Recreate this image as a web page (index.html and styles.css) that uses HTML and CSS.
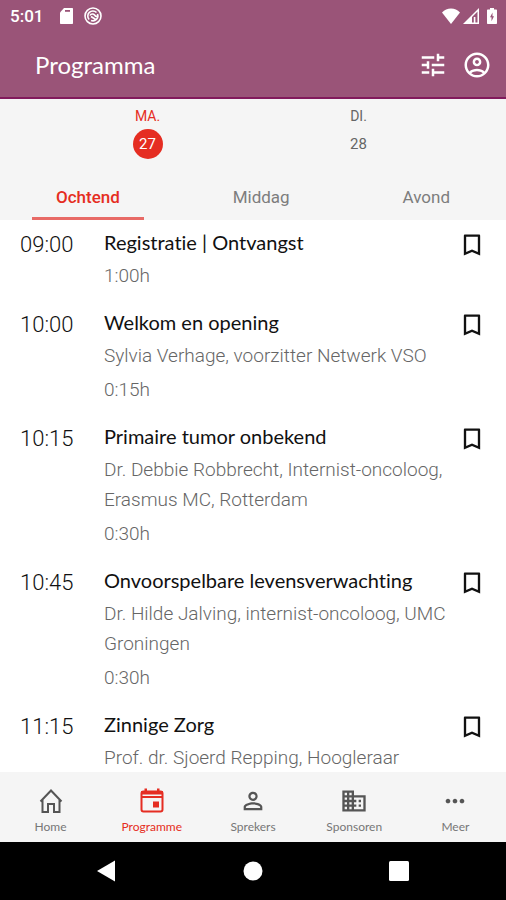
FILE: index.html
```html
<!DOCTYPE html>
<html lang="nl">
<head>
<meta charset="UTF-8">
<meta name="viewport" content="width=device-width, initial-scale=1.0">
<title>Programma</title>
<link rel="stylesheet" href="styles.css">
</head>
<body>
<!-- Icons used more than once -->
<svg width="0" height="0" class="defs">
    <symbol id="bookmark" viewBox="0 0 24 24"><path d="M18 3H6c-.6 0-1 .4-1 1v17l7-3 7 3V4c0-.6-.4-1-1-1zm-1 15l-5-2.180L7 18V5h10v13z"/></symbol>
</svg>

<header class="header">
    <div class="status">
        <span class="clock">5:01</span>
        <svg class="s-icon" viewBox="0 0 18 18"><path d="M7 1h8c.6 0 1 .4 1 1v14c0 .6-.4 1-1 1H4c-.6 0-1-.4-1-1V5.500z"/><path class="cut" d="M8 3h5v1.800H8z"/></svg>
        <svg class="s-icon" viewBox="0 0 18 18"><circle class="line" cx="9" cy="9" r="8"/><path class="line" d="M5.200 12.500A5 5 0 0 1 12.500 5.500M13.500 7A5 5 0 0 1 7 13.500M6 8.500c1-2 3.500-2 4.500-.5s1.500 1.500 2.500 1.500M7 9.500l5.500 3.500"/></svg>
        <span class="spacer"></span>
        <svg class="s-icon wifi" viewBox="0 0 18 18"><path d="M9 17L0 5.500C2.500 3 5.500 1.500 9 1.500S15.500 3 18 5.500z"/></svg>
        <svg class="s-icon signal" viewBox="0 0 18 18"><path fill-rule="evenodd" d="M17 1v16H1zM15.500 4.500L10 10v5.500h1.800V10h1.600v5.500h2.100z"/></svg>
        <svg class="s-icon battery" viewBox="0 0 12 18"><path d="M4 1h4v1.500h2c.6 0 1 .4 1 1V16c0 .6-.4 1-1 1H2c-.6 0-1-.4-1-1V3.500c0-.6.400-1 1-1h2z"/><path class="cut" d="M6.500 5.500L4 10.200h1.500v4L8 9.300H6.500z"/></svg>
    </div>
    <div class="toolbar">
        <h1>Programma</h1>
        <button class="icon-btn" type="button" aria-label="Filter">
            <svg viewBox="0 0 24 24"><path d="M3 17v2h6v-2H3zM3 5v2h10V5H3zm10 16v-2h8v-2h-8v-2h-2v6h2zM7 9v2H3v2h4v2h2V9H7zm14 4v-2H11v2h10zm-6-4h2V7h4V5h-4V3h-2v6z"/></svg>
        </button>
        <button class="icon-btn" type="button" aria-label="Profiel">
            <svg viewBox="0 0 24 24"><path d="M12 2C6.480 2 2 6.480 2 12s4.480 10 10 10 10-4.480 10-10S17.520 2 12 2zM7.350 18.500C8.660 17.560 10.260 17 12 17s3.340.56 4.650 1.500C15.340 19.440 13.740 20 12 20s-3.340-.56-4.650-1.500zm10.790-1.380C16.450 15.800 14.320 15 12 15s-4.450.8-6.140 2.120C4.700 15.730 4 13.950 4 12c0-4.420 3.580-8 8-8s8 3.580 8 8c0 1.950-.7 3.730-1.860 5.120zM12 6c-1.930 0-3.500 1.570-3.500 3.500S10.070 13 12 13s3.500-1.570 3.500-3.500S13.930 6 12 6zm0 5c-.83 0-1.500-.67-1.500-1.500S11.170 8 12 8s1.500.67 1.500 1.500S12.830 11 12 11z"/></svg>
        </button>
    </div>
</header>

<!-- Days -->
<div class="days">
    <button class="day active" type="button"><span>MA.</span><span class="num">27</span></button>
    <button class="day" type="button"><span>DI.</span><span class="num">28</span></button>
</div>

<!-- Parts of the day -->
<div class="tabs">
    <button class="tab active" type="button">Ochtend</button>
    <button class="tab" type="button">Middag</button>
    <button class="tab" type="button">Avond</button>
</div>

<main class="list">
    <article class="item">
        <time class="time">09:00</time>
        <div class="info">
            <h2>Registratie | Ontvangst</h2>
            <p>1:00h</p>
        </div>
        <button class="mark" type="button" aria-label="Bewaren"><svg><use href="#bookmark"/></svg></button>
    </article>
    <article class="item">
        <time class="time">10:00</time>
        <div class="info">
            <h2>Welkom en opening</h2>
            <p>Sylvia Verhage, voorzitter Netwerk VSO</p>
            <p>0:15h</p>
        </div>
        <button class="mark" type="button" aria-label="Bewaren"><svg><use href="#bookmark"/></svg></button>
    </article>
    <article class="item">
        <time class="time">10:15</time>
        <div class="info">
            <h2>Primaire tumor onbekend</h2>
            <p>Dr. Debbie Robbrecht, Internist-oncoloog, Erasmus MC, Rotterdam</p>
            <p>0:30h</p>
        </div>
        <button class="mark" type="button" aria-label="Bewaren"><svg><use href="#bookmark"/></svg></button>
    </article>
    <article class="item">
        <time class="time">10:45</time>
        <div class="info">
            <h2>Onvoorspelbare levensverwachting</h2>
            <p>Dr. Hilde Jalving, internist-oncoloog, UMC Groningen</p>
            <p>0:30h</p>
        </div>
        <button class="mark" type="button" aria-label="Bewaren"><svg><use href="#bookmark"/></svg></button>
    </article>
    <article class="item">
        <time class="time">11:15</time>
        <div class="info">
            <h2>Zinnige Zorg</h2>
            <p>Prof. dr. Sjoerd Repping, Hoogleraar</p>
        </div>
        <button class="mark" type="button" aria-label="Bewaren"><svg><use href="#bookmark"/></svg></button>
    </article>
</main>

<nav class="nav">
    <a href="#">
        <svg viewBox="0 0 30 30"><path class="line" d="M4.500 15.500L15 4.500l10.500 11M6.500 13.500v12.500h5.500v-8h6v8h5.500V13.500"/></svg>
        <span>Home</span>
    </a>
    <a href="#" class="active">
        <svg viewBox="0 0 30 30"><rect class="line" x="4.500" y="5.500" width="21" height="20" rx="2"/><path d="M7.500 2.500h2.500v4H7.500zM20 2.500h2.500v4H20zM4 5h22v3.500H4zM4 10h22v2H4zM16 15.500h6v6h-6z"/></svg>
        <span>Programme</span>
    </a>
    <a href="#">
        <svg viewBox="0 0 24 24"><path d="M12 5.900c1.160 0 2.100.94 2.100 2.100s-.94 2.100-2.100 2.100S9.900 9.160 9.900 8s.94-2.100 2.100-2.100m0 9c2.970 0 6.100 1.460 6.100 2.100v1.100H5.900V17c0-.64 3.130-2.100 6.100-2.100M12 4C9.790 4 8 5.790 8 8s1.790 4 4 4 4-1.790 4-4-1.790-4-4-4zm0 9c-2.670 0-8 1.340-8 4v3h16v-3c0-2.660-5.330-4-8-4z"/></svg>
        <span>Sprekers</span>
    </a>
    <a href="#">
        <svg viewBox="0 0 24 24"><path d="M12 7V3H2v18h20V7H12zM6 19H4v-2h2v2zm0-4H4v-2h2v2zm0-4H4V9h2v2zm0-4H4V5h2v2zm4 12H8v-2h2v2zm0-4H8v-2h2v2zm0-4H8V9h2v2zm0-4H8V5h2v2zm10 12h-8v-2h2v-2h-2v-2h2v-2h-2V9h8v10zm-2-8h-2v2h2v-2zm0 4h-2v2h2v-2z"/></svg>
        <span>Sponsoren</span>
    </a>
    <a href="#">
        <svg viewBox="0 0 24 24"><path d="M6 10c-1.100 0-2 .9-2 2s.9 2 2 2 2-.9 2-2-.9-2-2-2zm12 0c-1.100 0-2 .9-2 2s.9 2 2 2 2-.9 2-2-.9-2-2-2zm-6 0c-1.100 0-2 .9-2 2s.9 2 2 2 2-.9 2-2-.9-2-2-2z"/></svg>
        <span>Meer</span>
    </a>
</nav>

<div class="sysbar">
    <button type="button" aria-label="Terug"><svg viewBox="0 0 24 24"><path d="M20 1.500v21L2 12z"/></svg></button>
    <button type="button" aria-label="Startscherm"><svg viewBox="0 0 24 24"><circle cx="12" cy="12" r="9.500"/></svg></button>
    <button type="button" aria-label="Overzicht"><svg viewBox="0 0 24 24"><rect x="2" y="2" width="20" height="20" rx="1.500"/></svg></button>
</div>
</body>
</html>
```
FILE: styles.css
```css
:root{
    --purple:#9a5478;
    --red:#e52d22;
    --bar:#f5f5f5;
    --grey:#7d7d7d;
}
*{box-sizing:border-box;}
body{
    margin:0;
    height:100vh;
    display:flex;
    flex-direction:column;
    font-family:Roboto,sans-serif;
    background:#fff;
    color:#111;
}
h1,h2,p{margin:0;}
button{
    border:none;
    padding:0;
    background:none;
    font-family:inherit;
    color:inherit;
}
svg{display:block;fill:currentColor;}
.defs{position:absolute;}
.line{fill:none;stroke:currentColor;stroke-width:2;}

/* header */
.header{
    background:var(--purple);
    color:#fff;
    border-bottom:2px solid #821a5c;
}
.status{
    display:flex;
    align-items:center;
    height:32px;
    padding:0 8px 0 10px;
}
.clock{font-size:17px;font-weight:500;margin-right:14px;}
.s-icon{width:18px;height:18px;margin-right:9px;}
.s-icon .line{stroke-width:1.6;}
.wifi,.signal{margin-right:2px;}
.battery{width:12px;margin:0 0 0 4px;}
.cut{fill:var(--purple);}
.spacer{flex:1;}
.toolbar{
    display:flex;
    align-items:center;
    gap:14px;
    height:65px;
    padding:0 14px 0 35px;
}
.toolbar h1{
    flex:1;
    font-family:Lato,sans-serif;
    font-size:24px;
    font-weight:400;
}
.icon-btn svg{width:30px;height:30px;}

/* days and tabs */
.days{
    display:flex;
    padding:6px 42px 0;
    background:var(--bar);
}
.day{
    flex:1;
    display:flex;
    flex-direction:column;
    align-items:center;
    gap:2px;
    height:68px;
    font-size:14px;
    line-height:22px;
    font-weight:400;
    color:#666;
}
.num{
    width:30px;
    height:30px;
    line-height:30px;
    border-radius:50%;
    font-size:15px;
}
.day.active{color:var(--red);}
.day.active .num{background:var(--red);color:#fff;}
.tabs{
    display:flex;
    justify-content:space-between;
    padding:0 32px;
    background:var(--bar);
}
.tab{
    height:47px;
    padding:3px 24px 0;
    font-size:17px;
    color:var(--grey);
    border-bottom:3px solid transparent;
}
.tab.active{
    font-weight:500;
    color:var(--red);
    border-color:#e86a66;
}

/* sessions */
.list{flex:1;min-height:0;overflow:hidden;}
.item{
    display:flex;
    align-items:flex-start;
    padding:9px 20px;
}
.time{
    width:84px;
    font-size:22px;
    line-height:32px;
    font-weight:300;
}
.info{flex:1;}
.info h2{
    margin-bottom:6px;
    font-family:Lato,sans-serif;
    font-size:20px;
    line-height:26px;
    font-weight:400;
    font-variant-ligatures:none;
}
.info p{
    font-size:19px;
    line-height:30px;
    font-weight:300;
    color:#666;
}
.info p + p{margin-top:4px;}
.mark{height:32px;}
.mark svg{width:28px;height:28px;}

/* bottom navigation */
.nav{
    display:flex;
    height:70px;
    background:var(--bar);
}
.nav a{
    flex:1;
    display:flex;
    flex-direction:column;
    align-items:center;
    gap:4px;
    padding-top:14px;
    font-family:Lato,sans-serif;
    font-size:12px;
    line-height:14px;
    color:#555;
    text-decoration:none;
}
.nav span{color:#777;}
.nav a.active,.nav .active span{color:var(--red);}
.nav svg{width:30px;height:30px;}
.nav a:nth-child(n+3) svg{width:28px;}
.sysbar{
    display:flex;
    justify-content:center;
    gap:122px;
    height:58px;
    background:#000;
    color:#fff;
}
.sysbar svg{width:24px;height:24px;}
```
